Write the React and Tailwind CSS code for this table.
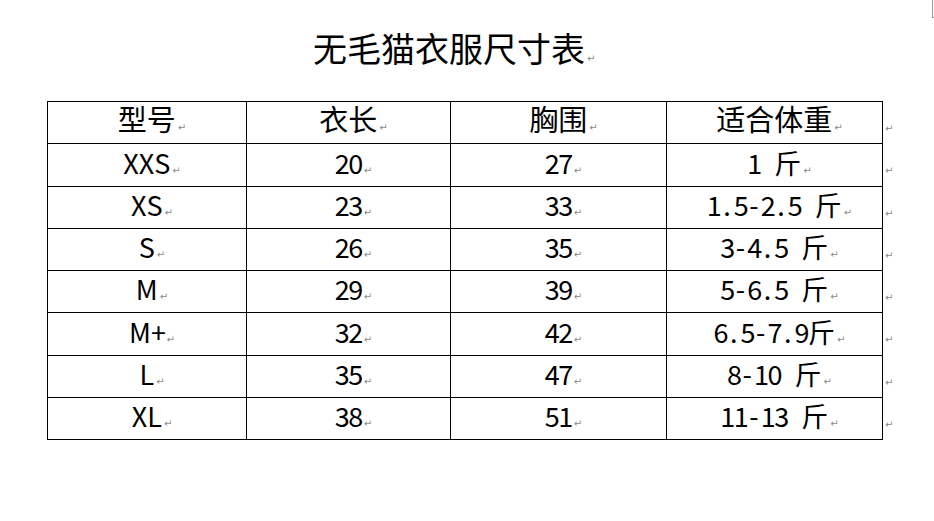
import React from "react";

const rows = [
  ["XXS", "20", "27", "1 斤"],
  ["XS", "23", "33", "1.5-2.5 斤"],
  ["S", "26", "35", "3-4.5 斤"],
  ["M", "29", "39", "5-6.5 斤"],
  ["M+", "32", "42", "6.5-7.9斤"],
  ["L", "35", "47", "8-10 斤"],
  ["XL", "38", "51", "11-13 斤"],
];

function Mark() {
  return (
    <span className="ml-[2px] mr-[-10px] text-[10px] text-[#8a8a8a] font-['DejaVu_Sans',sans-serif]">
      ↵
    </span>
  );
}

function Txt({ s }) {
  return (
    <>
      {Array.from(s).map((c, i) => {
        const code = c.charCodeAt(0);
        if (code >= 65 && code <= 90) {
          return (
            <span key={i} className="inline-block">
              {c}
            </span>
          );
        }
        if (code < 128) {
          return (
            <span key={i} className="inline-block w-[13.5px] text-center">
              {c === " " ? "\u00a0" : c}
            </span>
          );
        }
        return <span key={i}>{c}</span>;
      })}
    </>
  );
}

function Cell({ children, last, header }) {
  return (
    <div
      className={
        "relative flex items-center justify-center border-r border-b border-black " +
        (header ? "text-[29px] leading-[29px]" : "text-[27px] leading-[27px] pt-[2px]")
      }
    >
      <span className="whitespace-nowrap">
        {children}
        <Mark />
      </span>
      {last && (
        <span className="absolute left-[calc(100%+3px)] top-[calc(50%+1px)] h-[10px] text-[10px] leading-[10px] text-[#8a8a8a] font-['DejaVu_Sans',sans-serif]">
          ↵
        </span>
      )}
    </div>
  );
}

export default function App() {
  return (
    <div className="relative w-[934px] h-[521px] overflow-hidden bg-white text-black font-['Noto_Sans_CJK_SC',sans-serif]">
      <div className="absolute left-[932px] top-0 h-[17px] w-px bg-[#9a9a9a]" />
      <div className="absolute left-[932px] top-[17px] h-px w-[2px] bg-[#9a9a9a]" />

      <div className="pt-[31px]">
        <div className="pl-[313px] h-[34px] text-[34px] leading-[34px] whitespace-nowrap">
          无毛猫衣服尺寸表
          <Mark />
        </div>

        <div className="mt-[36px] ml-[47px] w-[836px] grid grid-cols-[199px_204px_216px_216px] grid-rows-[42px_43px_42px_42px_42px_43px_42px_42px] border-t border-l border-black">
          <Cell header>型号</Cell>
          <Cell header>衣长</Cell>
          <Cell header>胸围</Cell>
          <Cell header last>适合体重</Cell>
          {rows.map((r, i) => (
            <React.Fragment key={i}>
              <Cell><Txt s={r[0]} /></Cell>
              <Cell><Txt s={r[1]} /></Cell>
              <Cell><Txt s={r[2]} /></Cell>
              <Cell last><Txt s={r[3]} /></Cell>
            </React.Fragment>
          ))}
        </div>
      </div>
    </div>
  );
}
